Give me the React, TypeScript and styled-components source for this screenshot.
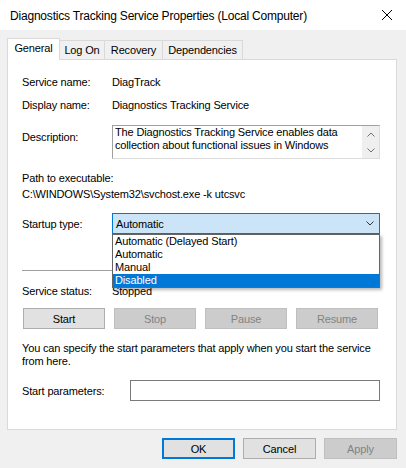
import React from "react";
import styled, { createGlobalStyle } from "styled-components";

const UI_FONT = `"Liberation Sans", Arial, sans-serif`;

const GlobalStyle = createGlobalStyle`
  *, *::before, *::after { box-sizing: border-box; }
  html, body { margin: 0; padding: 0; background: #f0f0f0; }
  body {
    font-family: ${UI_FONT};
    font-size: 11px;
    letter-spacing: -0.15px;
    color: #000;
  }
`;

const Window = styled.div`
  width: 406px;
  height: 468px;
  display: flex;
  flex-direction: column;
  background: #f0f0f0;
  overflow: hidden;
`;

const TitleBar = styled.header`
  height: 30px;
  flex: none;
  background: #fff;
  display: flex;
  align-items: center;
  justify-content: space-between;
  padding: 0 14px 0 10px;
`;

const TitleText = styled.span`
  font-size: 12px;
  letter-spacing: -0.2px;
  line-height: 16px;
  padding-top: 1px;
`;

const CloseGlyph = styled.svg`
  width: 10px;
  height: 10px;
  display: block;
`;

const Body = styled.div`
  flex: 1;
  display: flex;
  flex-direction: column;
  padding: 8px 9px 0 7px;
`;

const TabStrip = styled.div`
  display: flex;
  align-items: flex-end;
  height: 22px;
  margin-bottom: -1px;
  position: relative;
  z-index: 1;
`;

const Tab = styled.div<{ $active?: boolean; $w: number }>`
  width: ${(p) => p.$w}px;
  height: ${(p) => (p.$active ? 22 : 20)}px;
  margin-left: -1px;
  &:first-child { margin-left: 0; }
  border: 1px solid #d9d9d9;
  border-bottom: ${(p) => (p.$active ? "none" : "1px solid #d9d9d9")};
  background: ${(p) => (p.$active ? "#fff" : "#f0f0f0")};
  position: relative;
  z-index: ${(p) => (p.$active ? 2 : 1)};
  padding-top: 2px;
  line-height: 14px;
  text-align: center;
  white-space: nowrap;
`;

const Panel = styled.section`
  height: 371px;
  flex: none;
  background: #fff;
  border: 1px solid #d9d9d9;
  padding: 15px 16px 0 14px;
  display: flex;
  flex-direction: column;
`;

const FieldRow = styled.div<{ $gap: number; $align?: string; $label?: number }>`
  display: grid;
  grid-template-columns: ${(p) => p.$label ?? 90}px 1fr;
  align-items: ${(p) => p.$align ?? "center"};
  margin-top: ${(p) => p.$gap}px;
  line-height: 14px;
  white-space: nowrap;
`;

const FieldLabel = styled.span<{ $offset?: number }>`
  padding-top: ${(p) => p.$offset ?? 0}px;
`;

const TextLine = styled.div<{ $gap: number }>`
  margin-top: ${(p) => p.$gap}px;
  line-height: 14px;
  white-space: nowrap;
`;

const DescBox = styled.div`
  height: 34px;
  display: flex;
  background: #fff;
  border: 1px solid #a0a0a0;
  border-right-color: #dcdcdc;
  border-bottom-color: #dcdcdc;
`;

const DescText = styled.div`
  flex: 1;
  padding: 0 2px;
  line-height: 13px;
  white-space: normal;
  overflow: hidden;
`;

const ScrollTrack = styled.div`
  width: 17px;
  flex: none;
  background: #efefef;
  display: grid;
  grid-template-rows: 1fr 1fr;
  place-items: center;
`;

const Chevron = styled.svg`
  width: 8px;
  height: 5px;
  display: block;
`;

const Combo = styled.div`
  position: relative;
  height: 21px;
  border: 1px solid #0078d7;
  background: #cce4f7;
  display: flex;
  align-items: center;
  justify-content: space-between;
  padding: 0 5px 0 3px;
`;

const DropList = styled.ul`
  position: absolute;
  top: 20px;
  left: -1px;
  right: -1px;
  margin: 0;
  padding: 0;
  list-style: none;
  background: #fff;
  border: 1px solid #646464;
  box-shadow: 2px 2px 3px rgba(0, 0, 0, 0.28);
  z-index: 5;
`;

const DropItem = styled.li<{ $selected?: boolean }>`
  height: 13px;
  line-height: 13px;
  padding-left: 2px;
  background: ${(p) => (p.$selected ? "#0078d7" : "transparent")};
  color: ${(p) => (p.$selected ? "#fff" : "#000")};
`;

const Separator = styled.hr<{ $gap: number }>`
  margin: ${(p) => p.$gap}px 1px 0 0;
  border: none;
  height: 1px;
  background: #a0a0a0;
`;

const ServiceButtons = styled.div<{ $gap: number }>`
  display: grid;
  grid-template-columns: repeat(4, 82px);
  column-gap: 9px;
  margin: ${(p) => p.$gap}px 0 0 1px;
`;

const PushButton = styled.button<{ $default?: boolean; $w?: number }>`
  height: 21px;
  width: ${(p) => (p.$w ? `${p.$w}px` : "auto")};
  padding: 0;
  font: inherit;
  letter-spacing: inherit;
  line-height: 14px;
  color: #000;
  background: #e1e1e1;
  border: ${(p) => (p.$default ? "2px solid #0078d7" : "1px solid #adadad")};
  &:disabled {
    background: #cccccc;
    border-color: #bfbfbf;
    color: #838383;
  }
`;

const Paragraph = styled.p<{ $gap: number }>`
  margin: ${(p) => p.$gap}px 0 0 0;
  line-height: 13px;
`;

const ParamInput = styled.div`
  height: 21px;
  background: #fff;
  border: 1px solid #7a7a7a;
`;

const ButtonBar = styled.div`
  display: flex;
  justify-content: flex-end;
  gap: 8px;
  margin-top: 8px;
`;

const ChevronDown = ({ color }: { color: string }) => (
  <Chevron viewBox="0 0 8 5">
    <path d="M0.5 0.5 L4 4 L7.5 0.5" fill="none" stroke={color} strokeWidth="1" />
  </Chevron>
);

const ChevronUp = ({ color }: { color: string }) => (
  <Chevron viewBox="0 0 8 5">
    <path d="M0.5 4.5 L4 1 L7.5 4.5" fill="none" stroke={color} strokeWidth="1" />
  </Chevron>
);

const tabs = [
  { label: "General", w: 53, active: true },
  { label: "Log On", w: 46 },
  { label: "Recovery", w: 59 },
  { label: "Dependencies", w: 81 },
];

const startupOptions = ["Automatic (Delayed Start)", "Automatic", "Manual", "Disabled"];

export default function App() {
  return (
    <>
      <GlobalStyle />
      <Window>
        <TitleBar>
          <TitleText>Diagnostics Tracking Service Properties (Local Computer)</TitleText>
          <CloseGlyph viewBox="0 0 10 10">
            <path d="M0 0 L10 10 M10 0 L0 10" stroke="#000" strokeWidth="1" />
          </CloseGlyph>
        </TitleBar>
        <Body>
          <TabStrip>
            {tabs.map((t) => (
              <Tab key={t.label} $w={t.w} $active={t.active}>
                {t.label}
              </Tab>
            ))}
          </TabStrip>
          <Panel>
            <FieldRow $gap={0}>
              <FieldLabel>Service name:</FieldLabel>
              <span>DiagTrack</span>
            </FieldRow>
            <FieldRow $gap={9}>
              <FieldLabel>Display name:</FieldLabel>
              <span>Diagnostics Tracking Service</span>
            </FieldRow>
            <FieldRow $gap={13} $align="start">
              <FieldLabel $offset={5}>Description:</FieldLabel>
              <DescBox>
                <DescText>
                  The Diagnostics Tracking Service enables data collection about functional issues in Windows
                </DescText>
                <ScrollTrack>
                  <ChevronUp color="#707070" />
                  <ChevronDown color="#707070" />
                </ScrollTrack>
              </DescBox>
            </FieldRow>
            <TextLine $gap={12}>Path to executable:</TextLine>
            <TextLine $gap={2}>C:\WINDOWS\System32\svchost.exe -k utcsvc</TextLine>
            <FieldRow $gap={12}>
              <FieldLabel>Startup type:</FieldLabel>
              <Combo>
                <span>Automatic</span>
                <ChevronDown color="#333" />
                <DropList>
                  {startupOptions.map((o) => (
                    <DropItem key={o} $selected={o === "Disabled"}>
                      {o}
                    </DropItem>
                  ))}
                </DropList>
              </Combo>
            </FieldRow>
            <Separator $gap={36} />
            <FieldRow $gap={13}>
              <FieldLabel>Service status:</FieldLabel>
              <span>Stopped</span>
            </FieldRow>
            <ServiceButtons $gap={10}>
              <PushButton>Start</PushButton>
              <PushButton disabled>Stop</PushButton>
              <PushButton disabled>Pause</PushButton>
              <PushButton disabled>Resume</PushButton>
            </ServiceButtons>
            <Paragraph $gap={13}>
              You can specify the start parameters that apply when you start the service from here.
            </Paragraph>
            <FieldRow $gap={12} $label={108}>
              <FieldLabel>Start parameters:</FieldLabel>
              <ParamInput />
            </FieldRow>
          </Panel>
          <ButtonBar>
            <PushButton $default $w={73}>OK</PushButton>
            <PushButton $w={73}>Cancel</PushButton>
            <PushButton disabled $w={73}>Apply</PushButton>
          </ButtonBar>
        </Body>
      </Window>
    </>
  );
}
